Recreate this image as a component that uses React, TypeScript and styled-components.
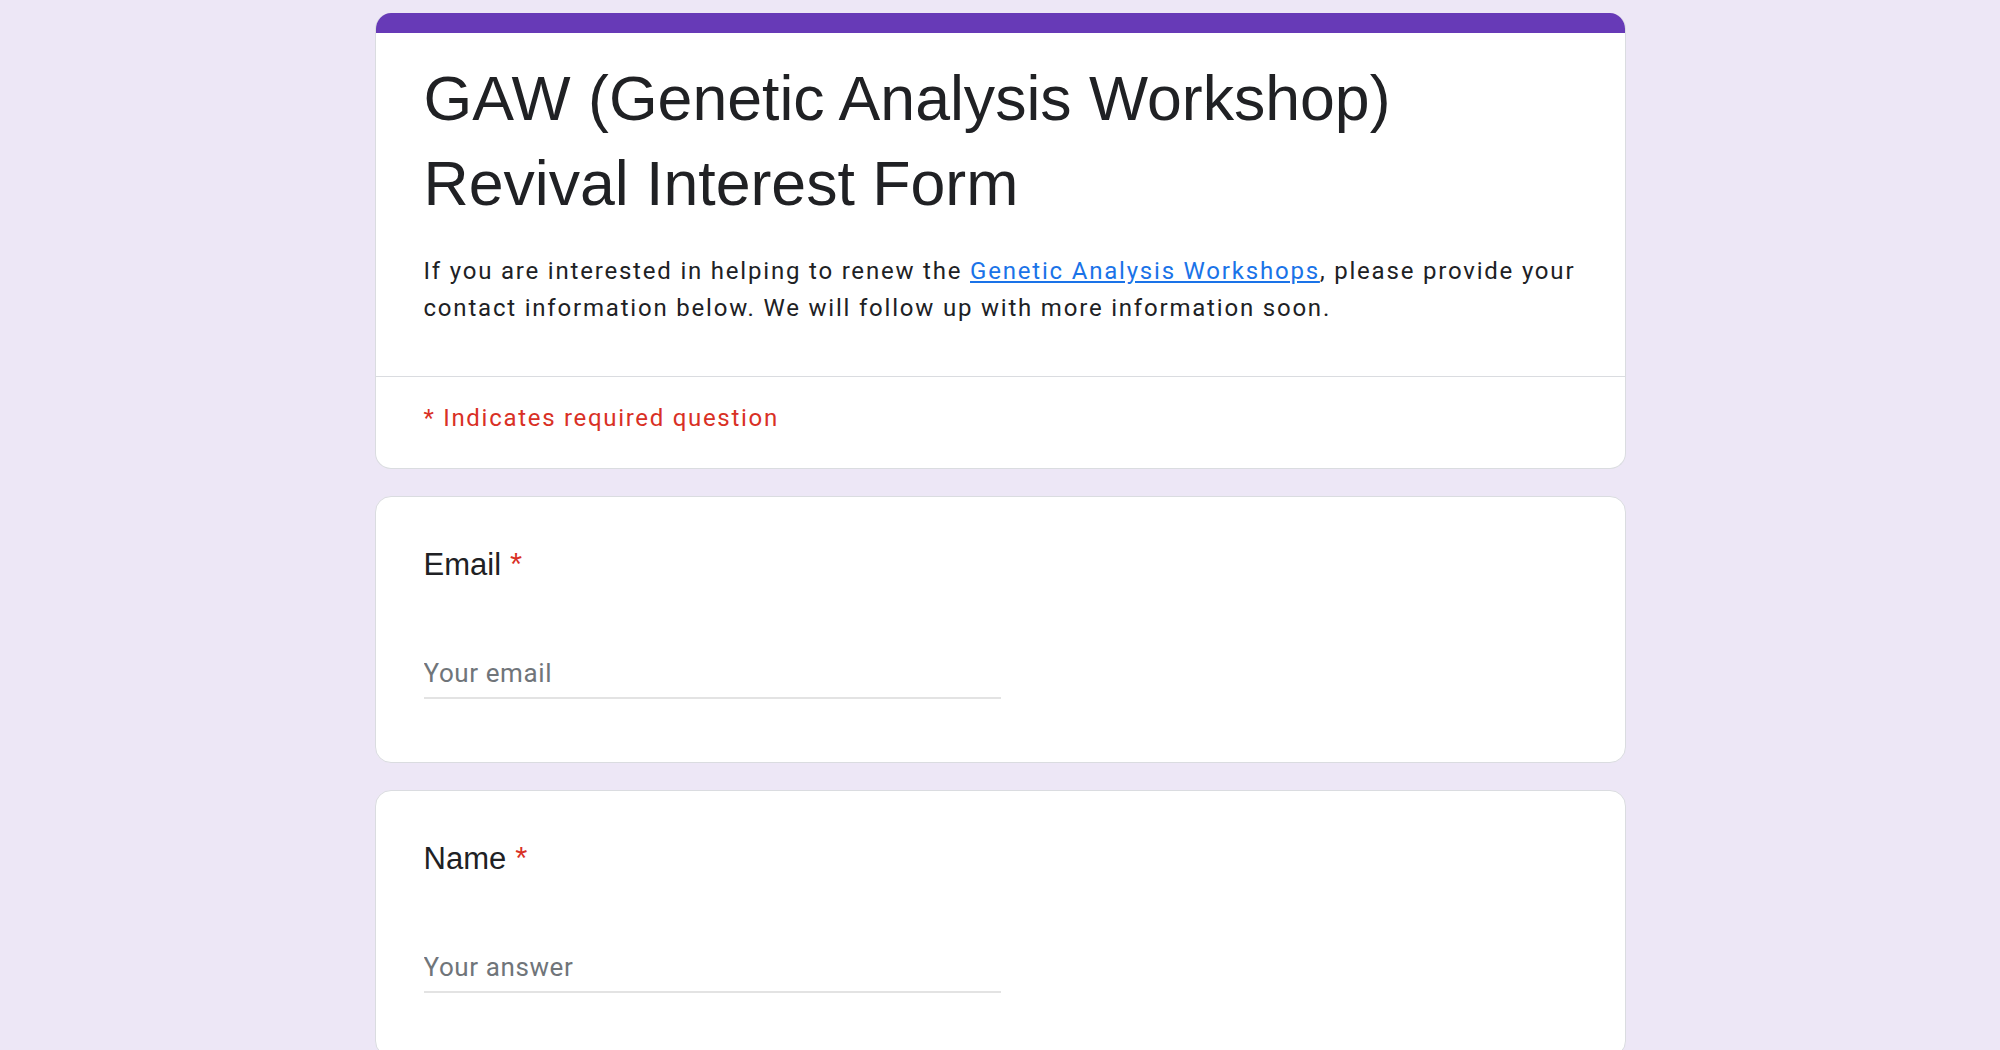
import React from "react";
import styled, { createGlobalStyle } from "styled-components";

const GlobalStyle = createGlobalStyle`
  html, body {
    margin: 0;
    padding: 0;
    background: #ede7f6;
  }
  * { box-sizing: border-box; }
`;

const Page = styled.div`
  min-height: 100vh;
  background: #ede7f6;
  display: flex;
  justify-content: center;
  padding-top: 13px;
  padding-bottom: 40px;
`;

const Column = styled.main`
  width: 1251px;
  display: flex;
  flex-direction: column;
  gap: 27px;
`;

const Card = styled.section`
  background: #ffffff;
  border: 1px solid #dadce0;
  border-radius: 16px;
  overflow: hidden;
`;

const HeaderCard = styled(Card)`
  border-top: none;
`;

const TopBar = styled.div`
  height: 20px;
  background: #673ab7;
`;

const HeaderBody = styled.div`
  padding: 23px 46px 49px 48px;
  display: flex;
  flex-direction: column;
  gap: 27px;
`;

const Title = styled.h1`
  margin: 0;
  font-family: "Liberation Sans", Arial, sans-serif;
  font-weight: 400;
  font-size: 62.6px;
  line-height: 85px;
  color: #202124;
`;

const Description = styled.p`
  margin: 0;
  font-family: Roboto, "Liberation Sans", sans-serif;
  font-size: 24px;
  line-height: 37px;
  letter-spacing: 1.8px;
  color: #202124;
`;

const Link = styled.a`
  color: #1a73e8;
  text-decoration: underline;
`;

const Divider = styled.hr`
  margin: 0;
  border: none;
  border-top: 1px solid #dadce0;
`;

const RequiredNote = styled.div`
  padding: 23px 46px 32px 48px;
  font-family: Roboto, "Liberation Sans", sans-serif;
  font-size: 24px;
  line-height: 36px;
  letter-spacing: 1.7px;
  color: #d93025;
`;

const QuestionBody = styled.div`
  padding: 48px 46px 63px 48px;
  display: flex;
  flex-direction: column;
  gap: 70px;
`;

const Label = styled.div`
  font-family: "Liberation Sans", Arial, sans-serif;
  font-size: 31px;
  line-height: 40px;
  color: #202124;
`;

const Star = styled.span`
  color: #d93025;
  margin-left: 9px;
`;

const Input = styled.input`
  width: 50%;
  border: none;
  border-bottom: 2px solid #e3e3e3;
  padding: 0 0 6px 0;
  margin: 0;
  outline: none;
  background: transparent;
  font-family: Roboto, "Liberation Sans", sans-serif;
  font-size: 26px;
  line-height: 36px;
  height: 44px;
  letter-spacing: 0.6px;
  color: #202124;
  &::placeholder {
    color: #70757a;
  }
`;

type QuestionProps = { label: string; placeholder: string; type?: string };

const Question = ({ label, placeholder, type = "text" }: QuestionProps) => (
  <Card>
    <QuestionBody>
      <Label>
        {label}
        <Star>*</Star>
      </Label>
      <Input type={type} placeholder={placeholder} />
    </QuestionBody>
  </Card>
);

export default function App() {
  return (
    <>
      <GlobalStyle />
      <Page>
        <Column>
          <HeaderCard>
            <TopBar />
            <HeaderBody>
              <Title>
                GAW (Genetic Analysis Workshop)
                <br />
                Revival Interest Form
              </Title>
              <Description>
                If you are interested in helping to renew the{" "}
                <Link href="#">Genetic Analysis Workshops</Link>, please provide your
                contact information below. We will follow up with more information soon.
              </Description>
            </HeaderBody>
            <Divider />
            <RequiredNote>* Indicates required question</RequiredNote>
          </HeaderCard>
          <Question label="Email" placeholder="Your email" type="email" />
          <Question label="Name" placeholder="Your answer" />
        </Column>
      </Page>
    </>
  );
}
